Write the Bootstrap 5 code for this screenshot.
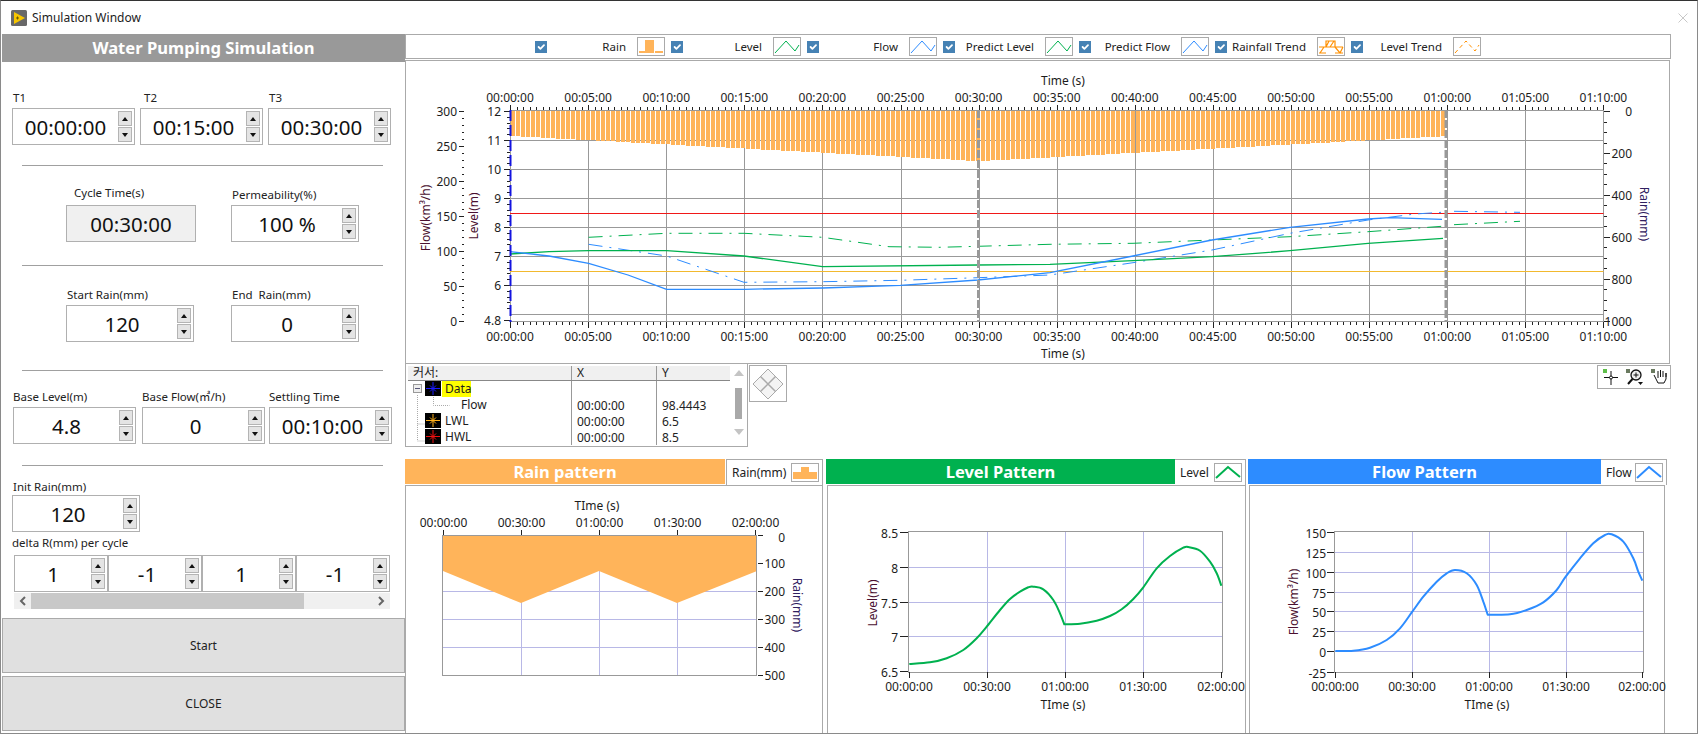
<!doctype html>
<html lang="en">
<head>
<meta charset="utf-8">
<title>Simulation Window</title>
<link href="https://cdn.jsdelivr.net/npm/bootstrap@5.3.0/dist/css/bootstrap.min.css" rel="stylesheet">
<style>
html,body{height:735px;overflow:hidden;background:#fff}
body{font-family:"Noto Sans","Noto Sans CJK KR",sans-serif;font-size:12px;color:#222;line-height:16px}
.win{width:1698px;height:734px;border:1px solid #8a8a8a;border-top-color:#333;overflow:hidden}
.tbar{height:33px;padding-left:10px;gap:5px;flex:none}
.tbar-x{margin-left:auto;margin-right:9px;line-height:0}
.lcol{width:404px;flex:none}
.lhead{height:28px;margin-left:1px;background:#999;color:#fff;font-weight:700;font-size:16.6px;line-height:27px;text-align:center}
.sep{height:1px;background:#a0a0a0;width:361px;margin-left:21px}
.lbl{height:18px;white-space:nowrap;font-size:11.5px}
.lb0{height:16px}
.lb-up{line-height:12px}
.pl1{padding-left:1px}.pl4{padding-left:4px}.pl8{padding-left:8px}
.spin{height:37px;border:1px solid #b0b0b0;background:#fff}
.spin-ro{background:#f0f0f0}
.val{flex:1 1 0;text-align:center;font-size:20.5px;color:#111;line-height:37px;min-width:0}
.arr{width:14px;margin-right:2px;gap:1px;flex:none}
.arr i{display:flex;align-items:center;justify-content:center;height:15px;background:#e4e4e4;border:1px solid #b4b4b4}
.arr i::before{content:"";border-left:3px solid transparent;border-right:3px solid transparent}
.arr .up::before{border-bottom:4px solid #111}
.arr .dn::before{border-top:4px solid #111}
.r1{margin-top:28px;padding-left:11px;gap:5px}
.w123{width:123px}.w128{width:128px}.w130{width:130px}
.r2{margin-top:21px;padding-left:65px;gap:35px}
.r3{margin-top:21px;padding-left:65px;gap:37px}
.r4{margin-top:18px;padding-left:12px}
.m6{margin-left:6px}.m4{margin-left:4px}
.m20{margin-top:20px}.m23{margin-top:23px}.m28{margin-top:28px}.m21{margin-top:21px}
.init{margin-top:13px;padding-left:11px}
.dlbl{margin-top:3px;padding-left:11px}
.drow{margin-top:4px;margin-left:13px;width:376px}
.drow .spin{width:94px}
.sbar{margin-top:1px;margin-left:13px;width:376px;height:16px;background:#f0f0f0}
.sbar-a{width:17px;flex:none;color:#666;text-align:center;line-height:0}
.sbar-t{width:273px;background:#c8c8c8}
.act{height:55px;margin-left:1px;width:403px;background:#e0e0e0;border:1px solid #aaa;border-radius:0;font-size:12px;color:#222;padding:0}
.act:hover{background:#e0e0e0;border-color:#aaa;color:#222}
.act1{margin-top:9px}.act2{margin-top:3px}
.rcol{width:1266px;flex:none}
.lgd{height:25px;border:1px solid #aaa;padding-left:129px;flex:none;font-size:11.5px}
.lgd-i{width:136px;flex:none}
.chk.form-check-input{width:12px;height:12px;margin:4px 0 0;align-self:flex-start;border-radius:0;border:none;flex:none}
.chk.form-check-input:checked{background-color:#4682b4}
.lgd-t{flex:1 1 0;text-align:right;padding-right:11px;white-space:nowrap}
.swa{width:28px;height:19px;border:1px solid #aaa;background:#fff;margin-right:6px;flex:none;display:block}
.mchart{height:304px;margin-top:1px;margin-right:1px;border:1px solid #aaa;flex:none}
.mchart svg,.pbody svg{display:block}
.cur-row{height:95px;flex:none}
.cur{width:343px;height:83px;border:1px solid #aaa;border-top:none;padding:2px 0 0 2px}
.cur-m{width:322px}
.cur-h{height:15px;background:#f0f0f0;border-bottom:1px solid #888;line-height:14px}
.c1{width:163px;flex:none;padding-left:5px}
.c2{width:85px;flex:none;padding-left:5px;border-left:1px solid #999}
.c3{width:74px;flex:none;padding-left:5px;border-left:1px solid #999}
.cur-b{height:64px}
.cur-b .c2,.cur-b .c3{padding-top:17px}
.cur-b .c1{padding:0}
.cur-s{width:17px;flex:none;padding:4px 0}
.cur-th{width:7px;height:31px;background:#a9a9a9;margin:12px 0 10px}
.tri-u{border-left:5px solid transparent;border-right:5px solid transparent;border-bottom:6px solid #c4c4c4}
.tri-d{border-left:5px solid transparent;border-right:5px solid transparent;border-top:6px solid #c4c4c4}
.dia{width:38px;height:37px;border:1px solid #aaa;margin-left:1px;margin-top:1px;flex:none}
.tool{width:74px;height:24px;border:1px solid #aaa;margin-top:1px;flex:none;gap:5px;padding-left:4px}
.pcard{flex:none}
.pc1{width:418px}.pc2{width:420px;margin-left:3px}.pc3{width:419px;margin-left:2px}
.phead{height:26px}
.ptitle{height:25px;color:#fff;font-weight:700;font-size:16.5px;line-height:25px;text-align:center;flex:none}
.t-rain{background:#ffb45a;width:320px}
.t-lev{background:#00b14f;width:349px}
.t-flow{background:#2d8cff;width:353px}
.pleg{flex:1 1 0;border:1px solid #aaa;border-bottom:none;border-left:none;padding-left:5px}
.pleg1{border-left:1px solid #aaa;margin-left:1px}
.pleg .swa{margin:0 3px 0 auto}
.pbody{height:248px;border:1px solid #aaa;border-bottom:none}
.pb2{margin-left:1px}
.pb3{margin-left:1px;margin-right:2px}
svg text{font-family:"Noto Sans","Noto Sans CJK KR",sans-serif;font-size:12px;fill:#1c1c1c;dominant-baseline:central}
</style>
</head>
<body>
<div class="win d-flex flex-column">
  <div class="tbar d-flex align-items-center">
    <svg width="16" height="16" viewBox="0 0 16 16"><rect width="16" height="16" rx="1.5" fill="#686868"/><path d="M3 2 L14 8 L3 14Z" fill="#f6c500"/><path d="M5 8h3M6.5 6.5v3" stroke="#6b5a00" stroke-width="1"/></svg>
    <span>Simulation Window</span>
    <span class="tbar-x"><svg width="10" height="10" viewBox="0 0 10 10"><path d="M.5 .5l9 9M9.5 .5l-9 9" stroke="#c8c8c8"/></svg></span>
  </div>
  <div class="d-flex flex-grow-1">
    <div class="lcol d-flex flex-column">
      <div class="lhead">Water Pumping Simulation</div>
      <div class="d-flex r1">
        <div class="w123"><div class="lbl pl1">T1</div><div class="spin d-flex"><span class="val">00:00:00</span><span class="arr d-flex flex-column justify-content-center"><i class="up"></i><i class="dn"></i></span></div></div>
        <div class="w123"><div class="lbl pl4">T2</div><div class="spin d-flex"><span class="val">00:15:00</span><span class="arr d-flex flex-column justify-content-center"><i class="up"></i><i class="dn"></i></span></div></div>
        <div class="w123"><div class="lbl pl1">T3</div><div class="spin d-flex"><span class="val">00:30:00</span><span class="arr d-flex flex-column justify-content-center"><i class="up"></i><i class="dn"></i></span></div></div>
      </div>
      <div class="sep m20"></div>
      <div class="d-flex r2">
        <div class="w130"><div class="lbl pl8 lb-up">Cycle Time(s)</div><div class="spin spin-ro d-flex"><span class="val">00:30:00</span></div></div>
        <div class="w128"><div class="lbl pl1">Permeability(%)</div><div class="spin d-flex"><span class="val">100 %</span><span class="arr d-flex flex-column justify-content-center"><i class="up"></i><i class="dn"></i></span></div></div>
      </div>
      <div class="sep m23"></div>
      <div class="d-flex r3">
        <div class="w128"><div class="lbl pl1">Start Rain(mm)</div><div class="spin d-flex"><span class="val">120</span><span class="arr d-flex flex-column justify-content-center"><i class="up"></i><i class="dn"></i></span></div></div>
        <div class="w128"><div class="lbl pl1">End&nbsp;&nbsp;Rain(mm)</div><div class="spin d-flex"><span class="val">0</span><span class="arr d-flex flex-column justify-content-center"><i class="up"></i><i class="dn"></i></span></div></div>
      </div>
      <div class="sep m28"></div>
      <div class="d-flex r4">
        <div class="w123"><div class="lbl">Base Level(m)</div><div class="spin d-flex"><span class="val">4.8</span><span class="arr d-flex flex-column justify-content-center"><i class="up"></i><i class="dn"></i></span></div></div>
        <div class="w123 m6"><div class="lbl">Base Flow(㎥/h)</div><div class="spin d-flex"><span class="val">0</span><span class="arr d-flex flex-column justify-content-center"><i class="up"></i><i class="dn"></i></span></div></div>
        <div class="w123 m4"><div class="lbl">Settling Time</div><div class="spin d-flex"><span class="val">00:10:00</span><span class="arr d-flex flex-column justify-content-center"><i class="up"></i><i class="dn"></i></span></div></div>
      </div>
      <div class="sep m21"></div>
      <div class="init"><div class="lbl lb0 pl1">Init Rain(mm)</div><div class="spin d-flex w128"><span class="val">120</span><span class="arr d-flex flex-column justify-content-center"><i class="up"></i><i class="dn"></i></span></div></div>
      <div class="dlbl lbl lb0">delta R(mm) per cycle</div>
      <div class="drow d-flex">
        <div class="spin d-flex"><span class="val">1</span><span class="arr d-flex flex-column justify-content-center"><i class="up"></i><i class="dn"></i></span></div>
        <div class="spin d-flex"><span class="val">-1</span><span class="arr d-flex flex-column justify-content-center"><i class="up"></i><i class="dn"></i></span></div>
        <div class="spin d-flex"><span class="val">1</span><span class="arr d-flex flex-column justify-content-center"><i class="up"></i><i class="dn"></i></span></div>
        <div class="spin d-flex"><span class="val">-1</span><span class="arr d-flex flex-column justify-content-center"><i class="up"></i><i class="dn"></i></span></div>
      </div>
      <div class="sbar d-flex align-items-stretch">
        <span class="sbar-a d-flex align-items-center justify-content-center"><svg width="7" height="10" viewBox="0 0 7 10"><path d="M6 1L2 5l4 4" fill="none" stroke="#666" stroke-width="2"/></svg></span>
        <span class="sbar-t"></span>
        <span class="sbar-a d-flex align-items-center justify-content-center ms-auto"><svg width="7" height="10" viewBox="0 0 7 10"><path d="M1 1l4 4-4 4" fill="none" stroke="#666" stroke-width="2"/></svg></span>
      </div>
      <button type="button" class="btn act act1">Start</button>
      <button type="button" class="btn act act2">CLOSE</button>
    </div>
    <div class="rcol d-flex flex-column">
      <div class="lgd d-flex align-items-center">
        <div class="lgd-i d-flex align-items-center"><input class="form-check-input chk" type="checkbox" checked aria-label="Rain"><span class="lgd-t">Rain</span><svg class="swa" viewBox="0 0 26 17"><path d="M1 13h8v2H1zM7 2h9v13H7zM17 13h8v2h-8z" fill="#ffb45a"/></svg></div>
        <div class="lgd-i d-flex align-items-center"><input class="form-check-input chk" type="checkbox" checked aria-label="Level"><span class="lgd-t">Level</span><svg class="swa" viewBox="0 0 26 17"><path d="M1 15L12 3l9 10 4-6" fill="none" stroke="#00b14f"/></svg></div>
        <div class="lgd-i d-flex align-items-center"><input class="form-check-input chk" type="checkbox" checked aria-label="Flow"><span class="lgd-t">Flow</span><svg class="swa" viewBox="0 0 26 17"><path d="M1 15L12 3l9 10 4-6" fill="none" stroke="#2d8cff"/></svg></div>
        <div class="lgd-i d-flex align-items-center"><input class="form-check-input chk" type="checkbox" checked aria-label="Predict Level"><span class="lgd-t">Predict Level</span><svg class="swa" viewBox="0 0 26 17"><path d="M1 15L12 3l9 10 4-6" fill="none" stroke="#00b14f"/></svg></div>
        <div class="lgd-i d-flex align-items-center"><input class="form-check-input chk" type="checkbox" checked aria-label="Predict Flow"><span class="lgd-t">Predict Flow</span><svg class="swa" viewBox="0 0 26 17"><path d="M1 15L12 3l9 10 4-6" fill="none" stroke="#2d8cff"/></svg></div>
        <div class="lgd-i d-flex align-items-center"><input class="form-check-input chk" type="checkbox" checked aria-label="Rainfall Trend"><span class="lgd-t">Rainfall Trend</span><svg class="swa" viewBox="0 0 26 17"><path d="M1 9h24M2 15l4-6h2V3h9v6h8M8 9l3-6M12 9l4-6M17 9l5 6 3-6M17 15h8M1 15h7" fill="none" stroke="#ff9000" stroke-width="1.2"/></svg></div>
        <div class="lgd-i d-flex align-items-center"><input class="form-check-input chk" type="checkbox" checked aria-label="Level Trend"><span class="lgd-t">Level Trend</span><svg class="swa" viewBox="0 0 26 17"><path d="M1 15L12 3l9 10 4-6" fill="none" stroke="#ff9000" stroke-dasharray="4 3"/></svg></div>
      </div>
      <div class="mchart"><svg id="mainSvg" width="1263" height="302" viewBox="406 61 1263 302"></svg></div>
      <div class="cur-row d-flex align-items-start">
        <div class="cur d-flex">
          <div class="cur-m">
            <div class="cur-h d-flex"><span class="c1">커서:</span><span class="c2">X</span><span class="c3">Y</span></div>
            <div class="cur-b d-flex">
              <div class="c1"><svg width="163" height="64" viewBox="408 382 163 64">
                <g fill="none" stroke="#aaa" stroke-dasharray="1 1"><path d="M417.500 396v46h8M417.500 425h8M433.500 398v8.500h16"/></g>
                <rect x="413.500" y="385.500" width="8" height="8" fill="#eee" stroke="#999"/><path d="M415 389.500h5" stroke="#557"/>
                <rect x="425" y="382" width="16" height="15" fill="#000"/><path d="M433 383v13M426 389.500h14M430 386.500l6 6M436 386.500l-6 6" stroke="#1a1aff"/>
                <rect x="442" y="382" width="29" height="16" fill="#ff0"/><text x="445" y="389.500">Data</text>
                <text x="461" y="405.500">Flow</text>
                <rect x="425" y="414" width="16" height="15" fill="#000"/><path d="M433 415v13M426 421.500h14M430 418.500l6 6M436 418.500l-6 6" stroke="#ffb01a"/>
                <text x="445" y="421.500">LWL</text>
                <rect x="425" y="430" width="16" height="15" fill="#000"/><path d="M433 431v13M426 437.500h14M430 434.500l6 6M436 434.500l-6 6" stroke="#f01010"/>
                <text x="445" y="437.500">HWL</text>
              </svg></div>
              <div class="c2"><div>00:00:00</div><div>00:00:00</div><div>00:00:00</div></div>
              <div class="c3"><div>98.4443</div><div>6.5</div><div>8.5</div></div>
            </div>
          </div>
          <div class="cur-s d-flex flex-column align-items-center"><span class="tri-u"></span><span class="cur-th"></span><span class="tri-d"></span></div>
        </div>
        <div class="dia d-flex align-items-center justify-content-center"><svg width="32" height="32" viewBox="0 0 32 32"><path d="M16 1L31 16 16 31 1 16Z" fill="#f4f4f4" stroke="#aaa"/><path d="M8.500 8.500l15 15M23.500 8.500l-15 15" stroke="#aaa" stroke-width="1.500"/></svg></div>
        <div class="tool d-flex align-items-center ms-auto">
          <svg width="18" height="18" viewBox="0 0 18 18"><rect x="1" y="1" width="4" height="4" fill="#5fbf4a"/><path d="M9 3v14M2 9.500h14" stroke="#111"/><circle cx="9" cy="9.500" r="1.500" fill="#fff" stroke="#111"/></svg>
          <svg width="20" height="18" viewBox="0 0 20 18"><rect x="1" y="1" width="4" height="4" fill="#6a7a60"/><circle cx="11" cy="7" r="5" fill="#eee" stroke="#111" stroke-width="1.300"/><path d="M11 4.500v5M8.500 7h5" stroke="#111"/><path d="M7.500 11L3 16" stroke="#111" stroke-width="2"/><path d="M13 14h5l-2.500 3z" fill="#111"/></svg>
          <svg width="18" height="18" viewBox="0 0 18 18"><rect x="1" y="1" width="4" height="4" fill="#6a7a60"/><path d="M5 9l3 6h6l2-4V5M8 10V3M10.500 9V2M13 9V3M16 9V5M5 9L4 7" fill="#fff" stroke="#111"/></svg>
        </div>
      </div>
      <div class="d-flex">
        <div class="pcard pc1">
          <div class="phead d-flex"><div class="ptitle t-rain">Rain pattern</div><div class="pleg pleg1 d-flex align-items-center"><span>Rain(mm)</span><svg class="swa" viewBox="0 0 26 17"><path d="M1 8h8V3h8v5h8v7H1z" fill="#ffb45a"/></svg></div></div>
          <div class="pbody"><svg id="rainSvg" width="416" height="247" viewBox="406 486 416 247"></svg></div>
        </div>
        <div class="pcard pc2">
          <div class="phead d-flex"><div class="ptitle t-lev">Level Pattern</div><div class="pleg d-flex align-items-center"><span>Level</span><svg class="swa" viewBox="0 0 26 17"><path d="M1 14L13 3l12 10" fill="none" stroke="#00b14f" stroke-width="2"/></svg></div></div>
          <div class="pbody pb2"><svg id="levSvg" width="417" height="247" viewBox="828 486 417 247"></svg></div>
        </div>
        <div class="pcard pc3">
          <div class="phead d-flex"><div class="ptitle t-flow">Flow Pattern</div><div class="pleg d-flex align-items-center"><span>Flow</span><svg class="swa" viewBox="0 0 26 17"><path d="M1 14L13 3l12 10" fill="none" stroke="#2d8cff" stroke-width="2"/></svg></div></div>
          <div class="pbody pb3"><svg id="flowSvg" width="416" height="247" viewBox="1250 486 416 247"></svg></div>
        </div>
      </div>
    </div>
  </div>
</div>
<script src="https://cdn.jsdelivr.net/npm/bootstrap@5.3.0/dist/js/bootstrap.bundle.min.js"></script>
<script>
const p=n=>Math.round(n)+.5;
const LN=(a,b,c,d,col,w,ex)=>`<line x1="${a}" y1="${b}" x2="${c}" y2="${d}" stroke="${col}" stroke-width="${w||1}" ${ex||''}/>`;
const TX=(x,y,s,an,ex)=>`<text x="${x}" y="${y}" text-anchor="${an||'middle'}" ${ex||''}>${s}</text>`;
const PL=(pts,col,w,ex)=>`<polyline points="${pts.map(q=>q[0].toFixed(1)+','+q[1].toFixed(1)).join(' ')}" fill="none" stroke="${col}" stroke-width="${w||1}" stroke-linejoin="round" ${ex||''}/>`;
const VT=(x,y,s,deg,col)=>`<text x="${x}" y="${y}" text-anchor="middle" transform="rotate(${deg} ${x} ${y})" style="fill:${col}">${s}</text>`;
const two=n=>String(n).padStart(2,'0');
const hms=m=>`${two(Math.floor(m/60))}:${two(m%60)}:00`;
/* Catmull-Rom curve through points; the run is split at the kink by calling it twice */
const CR=pts=>{let d='';for(let i=0;i<pts.length-1;i++){const a=pts[i-1]||pts[i],b=pts[i],c=pts[i+1],e=pts[i+2]||c;
 d+=`C${(b[0]+(c[0]-a[0])/6).toFixed(1)} ${(b[1]+(c[1]-a[1])/6).toFixed(1)} ${(c[0]-(e[0]-b[0])/6).toFixed(1)} ${(c[1]-(e[1]-b[1])/6).toFixed(1)} ${c[0].toFixed(1)} ${c[1].toFixed(1)}`;}
 return `M${pts[0][0].toFixed(1)} ${pts[0][1].toFixed(1)}`+d;};
const CURVE=(a,b,col)=>`<path d="${CR(a)}${CR(b).replace('M','L')}" fill="none" stroke="${col}" stroke-width="2" stroke-linejoin="round"/>`;

/* main chart */
(function(){
 let s='';const x0=510,st=78.1,top=110,bot=322,R=1603.5;
 for(let i=1;i<14;i++){const x=p(x0+i*st);s+=LN(x,top,x,bot,'#999');}
 for(let v=5;v<=11;v++){const y=p(111+(12-v)*29);s+=LN(x0,y,R,y,'#999');}
 const sx=1446;let bars='';
 for(let x=511;x<sx;x+=5){const t=(x-510)/(sx-510);const r=t<.5?120+240*t:360-240*t;const b=Math.round(111+r*.209);bars+=`<rect x="${x}" y="110" width="4" height="${b-110}" fill="#ffb45a"/>`;}
 s+=bars;
 s+=`<rect x="${x0}.500" y="110.500" width="1093" height="211" fill="none" stroke="#999"/>`;
 for(let i=0;i<=14;i++){const x=p(x0+i*st);s+=LN(x,105,x,110,'#222')+LN(x,322,x,328,'#222');
  s+=TX(x0+i*st,97,hms(i*5))+TX(x0+i*st,336,hms(i*5));
  if(i<14)for(let k=1;k<12;k++){const m=p(x0+i*st+k*st/12);s+=LN(m,107,m,110,'#222')+LN(m,322,m,325,'#222');}}
 s+=TX(1063,80,'Time (s)')+TX(1063,353,'Time (s)');
 /* flow axis */
 for(let i=0;i<=6;i++){const y=p(111+i*35);s+=LN(459,y,464,y,'#222');s+=TX(457,y,300-50*i,'end');
  if(i<6)for(let k=1;k<5;k++){const m=p(111+i*35+k*7);s+=LN(462,m,464,m,'#222');}}
 /* level axis */
 [[12,111],[11,140],[10,169],[9,198],[8,227],[7,256],[6,285],[4.8,320]].forEach(a=>{const y=p(a[1]);s+=LN(504,y,510,y,'#222');s+=TX(501,a[1],a[0],'end');});
 for(let i=0;i<7;i++)for(let k=1;k<5;k++){const m=p(111+i*29+k*5.8);if(m<321)s+=LN(507,m,510,m,'#222');}
 /* rain axis */
 for(let i=0;i<=5;i++){const y=p(111+i*41.9);s+=LN(1604,y,1610,y,'#222');s+=TX(1632,y,200*i,'end');
  if(i<5)for(let k=1;k<4;k++){const m=p(111+i*41.9+k*10.5);s+=LN(1604,m,1607,m,'#222');}}
 s+=VT(425,218,'Flow(km³/h)',-90,'#4a1030')+VT(473,216,'Level(m)',-90,'#4a1030')+VT(1644,214,'Rain(mm)',90,'#302060');
 /* lines */
 s+=LN(x0,213.500,R,213.500,'#f01818',1)+LN(x0,271.500,R,271.500,'#f2b92e',1);
 const dd='stroke-dasharray="14 7 2 7"';
 s+=PL([[588.6,237.3],[666.6,233.3],[744,233.3],[822.5,237.3],[889,246.7],[939,247.3],[978,246.3],[1050,244.3],[1133,243.3],[1212,240],[1290,236.7],[1368,231.7],[1442,226.3]],'#00b14f',1,dd);
 s+=PL([[1454,224.7],[1520,221.3]],'#00b14f',1,dd);
 s+=PL([[588.6,244.3],[666.6,256],[744,282.3],[822.5,281.7],[900.4,280.3],[978,277.7],[1050,275],[1133,262.7],[1212,250],[1290,233.3],[1368,220],[1415,214],[1442,212.3]],'#2d8cff',1,dd);
 s+=PL([[1454,211.3],[1520,212.3]],'#2d8cff',1,dd);
 s+=PL([[510,254],[549,251.7],[588.6,250.7],[666.6,250.7],[744,256],[822.5,266.7],[978,265],[1050,264.3],[1133,260.7],[1212,256.7],[1290,250.7],[1368,243.3],[1443,238.3]],'#00b14f',1.300);
 s+=PL([[510,251.7],[549,256],[588.6,263.3],[628,275],[666.6,289.3],[744,289.3],[822.5,288],[900.4,285.3],[978,280],[1050,272.7],[1133,256],[1212,240],[1290,227.3],[1368,219],[1390,217.7],[1442,219.3]],'#2d8cff',1.300);
 /* cursors */
 s+=LN(510.5,110,510.5,322,'#1414e0',2,'stroke-dasharray="11 4"');
 s+=LN(978.5,110,978.5,322,'#999',3,'stroke-dasharray="8 2"')+LN(1446,110,1446,322,'#999',3,'stroke-dasharray="8 2"');
 document.getElementById('mainSvg').innerHTML=s;
})();

/* shared small-chart frame */
function frame(o){
 let s='';
 o.hg.forEach(y=>s+=LN(o.x0,p(y),o.x1,p(y),'#b8b8e6'));
 o.vg.forEach(x=>s+=LN(p(x),o.y0,p(x),o.y1,'#b8b8e6'));
 return s;
}
const G='#999';
/* rain */
(function(){
 let s=frame({x0:443,x1:757,y0:535,y1:675,hg:[591,619,647],vg:[521,599,677]});
 s+=`<polygon points="443,535 757,535 757,571 677,603 599,571 521,603 443,571" fill="#ffb45a"/>`;
 s+=`<rect x="442.500" y="535.500" width="314" height="140" fill="none" stroke="${G}"/>`;
 [443,521,599,677,755].forEach((x,i)=>{s+=LN(p(x),530,p(x),535,'#222')+TX(x+.5,522,hms(i*30));});
 s+=TX(597,505,'TIme (s)');
 for(let i=0;i<=5;i++){const y=p(535+i*28);s+=LN(758,y,763,y,'#222');s+=TX(785,i==0?537:y,100*i,'end');}
 s+=VT(797,605,'Rain(mm)',90,'#302060');
 document.getElementById('rainSvg').innerHTML=s;
})();
/* level */
(function(){
 let s=frame({x0:908,x1:1222,y0:532,y1:672,hg:[567,602,636],vg:[987,1065,1143]});
 s+=`<rect x="908.500" y="531.500" width="314" height="141" fill="none" stroke="${G}"/>`;
 [909,987,1065,1143,1221].forEach((x,i)=>{s+=LN(p(x),672,p(x),678,'#222')+TX(x,686,hms(i*30));});
 s+=TX(1063,704,'TIme (s)');
 [['8.5',532],['8',567],['7.5',602],['7',636],['6.5',671]].forEach(a=>{s+=LN(900,p(a[1]),908,p(a[1]),'#222');s+=TX(898,a[1]+1,a[0],'end');});
 s+=VT(872,603,'Level(m)',-90,'#4a1030');
 const m=q=>[820+q[0]/3,450+q[1]/3];
 const a=[[268,642],[330,637],[380,625],[430,600],[470,565],[500,530],[540,480],[570,447],[600,425],[625,412],[640,410],[670,418],[700,450],[720,490],[733,523]].map(m);
 const b=[[733,523],[780,521],[830,512],[870,498],[905,478],[940,447],[970,412],[1010,355],[1050,318],[1090,293],[1105,291],[1140,302],[1170,335],[1190,370],[1204,407]].map(m);
 s+=CURVE(a,b,'#00b14f');
 document.getElementById('levSvg').innerHTML=s;
})();
/* flow */
(function(){
 let s=frame({x0:1334,x1:1643,y0:532,y1:672,hg:[552,572,592,611,631,651],vg:[1412,1489,1566]});
 s+=`<rect x="1334.500" y="531.500" width="309" height="141" fill="none" stroke="${G}"/>`;
 [1335,1412,1489,1566,1642].forEach((x,i)=>{s+=LN(p(x),672,p(x),678,'#222')+TX(x,686.5,hms(i*30));});
 s+=TX(1487,704,'TIme (s)');
 ['150','125','100','75','50','25','0','-25'].forEach((t,i)=>{const y=[532,552,572,592,611,631,651,672][i];s+=LN(1327,p(y),1334,p(y),'#222');s+=TX(1326,y+1,t,'end');});
 s+=VT(1293,602,'Flow(km³/h)',-90,'#4a1030');
 const m=q=>[1240+q[0]/3,355+q[1]/3];
 const a=[[286,888],[340,887],[390,878],[440,855],[480,820],[517,770],[550,725],[590,680],[620,655],[645,645],[680,655],[710,690],[730,740],[743,779]].map(m);
 const b=[[743,779],[810,778],[860,765],[910,742],[950,705],[977,665],[1020,610],[1060,565],[1095,540],[1115,538],[1150,560],[1180,610],[1195,650],[1207,677]].map(m);
 s+=CURVE(a,b,'#2d8cff');
 document.getElementById('flowSvg').innerHTML=s;
})();
</script>
</body>
</html>
